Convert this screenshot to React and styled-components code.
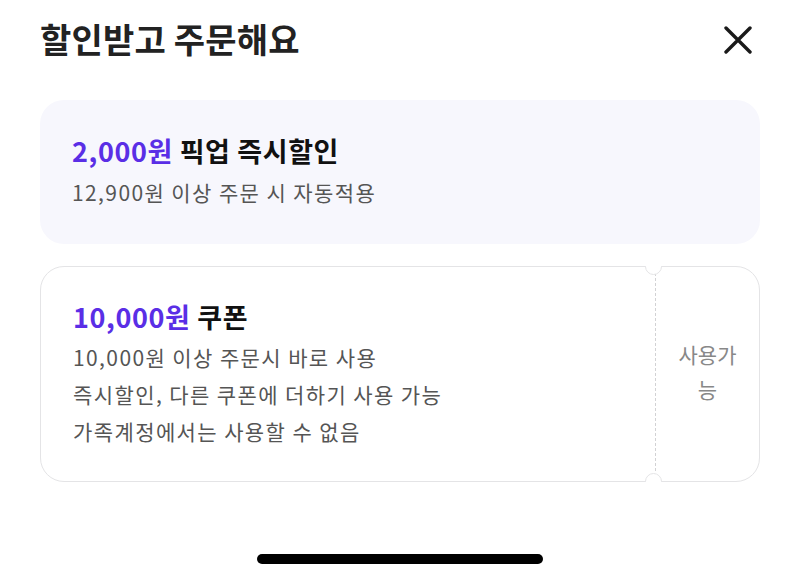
import styled, { createGlobalStyle } from 'styled-components'

const Global = createGlobalStyle`
  html, body {
    margin: 0;
    padding: 0;
    background: #ffffff;
  }
  body {
    font-family: "Noto Sans CJK KR", "Noto Sans", sans-serif;
    color: #222;
  }
`

const Sheet = styled.div`
  width: 800px;
  height: 580px;
  box-sizing: border-box;
  padding: 0 40px;
  display: flex;
  flex-direction: column;
  position: relative;
  overflow: hidden;
`

const Header = styled.div`
  height: 80px;
  display: flex;
  align-items: center;
  justify-content: space-between;
`

const Title = styled.h1`
  margin: 0;
  font-size: 34px;
  font-weight: 700;
  color: #222;
  letter-spacing: 0.2px;
  transform: translateY(-2px);
`

const CloseButton = styled.button`
  width: 28px;
  height: 28px;
  margin-right: 8px;
  border: none;
  background: none;
  padding: 0;
  display: flex;
  align-items: center;
  justify-content: center;
  cursor: pointer;
`

const List = styled.div`
  margin-top: 20px;
  display: flex;
  flex-direction: column;
  gap: 22px;
`

const PickupCard = styled.div`
  height: 144px;
  box-sizing: border-box;
  border-radius: 24px;
  background: #f7f7fd;
  padding: 32px 32px;
  display: flex;
  flex-direction: column;
  gap: 4px;
`

const Headline = styled.div`
  font-size: 27px;
  font-weight: 700;
  color: #111;
  line-height: 38px;
  letter-spacing: 0.6px;
`

const Amount = styled.span`
  color: #5a2ee6;
`

const Desc = styled.div`
  font-size: 21px;
  color: #555;
  line-height: 37px;
  letter-spacing: 1.4px;
`

const Coupon = styled.div`
  position: relative;
  height: 216px;
  box-sizing: border-box;
  border: 1.5px solid #e4e4e6;
  border-radius: 24px;
  display: flex;
`

const CouponBody = styled.div`
  flex: 1;
  padding: 31px 32px;
  display: flex;
  flex-direction: column;
  gap: 3px;
`

const Stub = styled.div`
  width: 104px;
  border-left: 1.5px dashed #d2d2d4;
  margin: 8px 0;
  display: flex;
  align-items: center;
  justify-content: center;
  text-align: center;
  font-size: 21px;
  line-height: 35px;
  color: #888;
  padding: 0 14px;
  box-sizing: border-box;
  transform: translateY(-2px);
`

const Notch = styled.div`
  position: absolute;
  right: 97px;
  ${(p) => (p.$bottom ? 'bottom: -9px;' : 'top: -9px;')}
  width: 15px;
  height: 15px;
  border-radius: 50%;
  background: #fff;
  border: 1.5px solid #e4e4e6;
  clip-path: ${(p) => (p.$bottom ? 'inset(0 0 50% 0)' : 'inset(50% 0 0 0)')};
`

const NotchMask = styled.div`
  position: absolute;
  right: 98px;
  ${(p) => (p.$bottom ? 'bottom: -2px;' : 'top: -2px;')}
  width: 15px;
  height: 3px;
  background: #fff;
`

const HomeBar = styled.div`
  position: absolute;
  left: 257px;
  bottom: 16px;
  width: 286px;
  height: 10px;
  border-radius: 5px;
  background: #000;
`

export default function App() {
  return (
    <>
      <Global />
      <Sheet>
        <Header>
          <Title>할인받고 주문해요</Title>
          <CloseButton aria-label="닫기">
            <svg width="28" height="28" viewBox="0 0 28 28">
              <path d="M2 2 L26 26 M26 2 L2 26" stroke="#1a1a1a" strokeWidth="3.4" strokeLinecap="round" />
            </svg>
          </CloseButton>
        </Header>
        <List>
          <PickupCard>
            <Headline>
              <Amount>2,000원</Amount> 픽업 즉시할인
            </Headline>
            <Desc>12,900원 이상 주문 시 자동적용</Desc>
          </PickupCard>
          <Coupon>
            <CouponBody>
              <Headline>
                <Amount>10,000원</Amount> 쿠폰
              </Headline>
              <div>
                <Desc>10,000원 이상 주문시 바로 사용</Desc>
                <Desc>즉시할인, 다른 쿠폰에 더하기 사용 가능</Desc>
                <Desc>가족계정에서는 사용할 수 없음</Desc>
              </div>
            </CouponBody>
            <Stub>사용가능</Stub>
            <NotchMask />
            <NotchMask $bottom />
            <Notch />
            <Notch $bottom />
          </Coupon>
        </List>
        <HomeBar />
      </Sheet>
    </>
  )
}
